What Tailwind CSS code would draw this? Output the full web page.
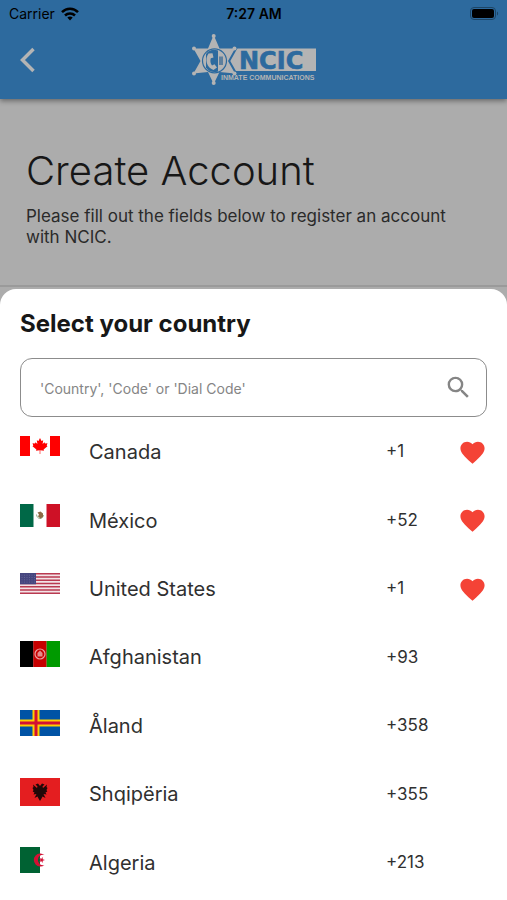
<!DOCTYPE html>
<html lang="en">

<head>
    <meta charset="UTF-8">
    <meta name="viewport" content="width=device-width, initial-scale=1.0">
    <title>Create Account</title>
    <script src="https://cdn.jsdelivr.net/npm/@tailwindcss/browser@4"></script>
</head>

<body class="min-h-screen flex flex-col bg-[#acacac] font-['Inter',sans-serif] text-[#171717]">
    <header class="bg-[#2d6a9e] shadow-[0_2px_5px_rgba(0,0,0,0.4)]">
        <!-- Status bar -->
        <div class="grid grid-cols-3 items-center h-7 pl-[9px] pr-2 text-black text-sm">
            <div class="flex items-center gap-[6px]">
                <span>Carrier</span>
                <svg class="w-[18px] h-[14px]" viewBox="0 0 18 14" fill="none" stroke="#000" stroke-width="2.5">
                    <path d="M1 5.2C5.4 0.6 12.6 0.6 17 5.2" />
                    <path d="M4 8.5C6.8 5.7 11.2 5.7 14 8.5" />
                    <path d="M6.3 10.6C7.8 9.2 10.2 9.2 11.7 10.6L9 13.5Z" fill="#000" stroke="none" />
                </svg>
            </div>
            <span class="text-center font-semibold">7:27 AM</span>
            <svg class="justify-self-end w-[29px] h-[14px]" viewBox="0 0 29 14">
                <rect x="0.5" y="0.5" width="25" height="12" rx="3.5" fill="none" stroke="#1d4565" />
                <rect x="2" y="2" width="22" height="9" rx="2" fill="#000" />
                <path d="M27 4.5V8.5C28.5 8 28.5 5 27 4.5Z" fill="#1d4565" />
            </svg>
        </div>
        <!-- Nav bar -->
        <div class="grid grid-cols-[1fr_auto_1fr] items-center h-[71px] px-4 pb-2">
            <button type="button" aria-label="Back" class="justify-self-start">
                <svg class="w-6 h-7" viewBox="0 0 24 28" fill="none" stroke="#b4b4b4" stroke-width="3.5">
                    <path d="M17.5 3L6.500 14L17.500 25" />
                </svg>
            </button>
            <svg class="w-[130px] h-[58px]" viewBox="189 31 130 58" role="img" aria-label="NCIC Inmate Communications">
                <path d="M228 48.5H316V71H228Z" fill="#b4b4b4" />
                <path d="M213.7 35L219.500 48.500H235L228 61L235 73.500L219.500 72L213.700 84L208 72L193.500 73.500L200.500 61L193.500 48.500H208Z"
                    fill="#b4b4b4" stroke="#2d6a9e" stroke-width="4" paint-order="stroke" />
                <g fill="#b4b4b4">
                    <circle cx="213.7" cy="36" r="2" />
                    <circle cx="213.7" cy="83" r="2" />
                    <circle cx="194" cy="48.5" r="2" />
                    <circle cx="194" cy="73.5" r="2" />
                    <circle cx="234.5" cy="48.5" r="2" />
                    <circle cx="234.5" cy="73.5" r="2" />
                </g>
                <circle cx="214.5" cy="60.8" r="12" fill="#b4b4b4" stroke="#2d6a9e" stroke-width="1.2" />
                <path d="M218 50.500V71.500A11 11 0 0 1 206 67.500L206 54A11 11 0 0 1 218 50.500Z" fill="#2d6a9e" />
                <path d="M212.500 53.200L208.500 53.500C204.500 59 206.500 67.500 213.500 70L217 67.500L214.500 64.200L212 65.500C210.300 63.300 210 60.500 210.800 58.200L213.500 57.500Z" fill="#b4b4b4" />
                <path d="M219 56.500H223V65H219Z" fill="#5d7f9d" />
                <text x="239" y="68.500" font-family="DejaVu Sans" font-weight="700" font-size="24" fill="#2d6a9e" stroke="#2d6a9e" stroke-width="0.6">NCIC</text>
                <text x="221" y="80" font-family="Liberation Sans" font-weight="700" font-size="7" fill="#b4b4b4">INMATE COMMUNICATIONS</text>
            </svg>
        </div>
    </header>

    <main class="h-[188px] border-b-2 border-[#9a9a9a] px-[26px] pt-12">
        <h1 class="text-[40px] leading-[48px] font-light">Create Account</h1>
        <p class="mt-[11px] text-[17px] leading-[21px] text-[#2a2a2a]">Please fill out the fields below to register an account with NCIC.</p>
    </main>

    <section class="mt-[2px] flex-1 flex flex-col rounded-t-2xl bg-white px-5 pt-5 pb-1" aria-labelledby="sheetTitle">
        <h2 id="sheetTitle" class="text-2xl leading-[30px] font-bold">Select your country</h2>
        <div class="relative mt-[19px]">
            <input type="text" id="search" aria-label="Search country" placeholder="'Country', 'Code' or 'Dial Code'"
                class="block w-full h-[59px] rounded-xl border border-[#8c8c8c] pl-[19px] pr-14 pt-[2px] text-sm placeholder:text-[#858585] focus:outline-none">
            <svg class="absolute right-[14px] top-[15px] w-[29px] h-[29px]" viewBox="0 0 24 24" fill="#858585">
                <path d="M15.5 14h-.79l-.28-.27A6.471 6.471 0 0 0 16 9.5 6.5 6.5 0 1 0 9.5 16c1.61 0 3.09-.59 4.23-1.57l.27.28v.79l5 4.99L20.49 19l-4.99-5zm-6 0C7.01 14 5 11.99 5 9.5S7.01 5 9.5 5 14 7.01 14 9.5 11.99 14 9.5 14z" />
            </svg>
        </div>

        <ul class="flex-1 grid auto-rows-fr text-[#303030]">
            <li>
                <button type="button" class="w-full h-full grid grid-cols-[69px_1fr_72px_29px] items-center pt-[2px] text-left">
                    <svg class="self-start mt-[17px] w-10 h-5" viewBox="0 0 40 20">
                        <path d="M0 0H40V20H0Z" fill="#fff" />
                        <path d="M0 0H10V20H0ZM30 0H40V20H30Z" fill="#f00" />
                        <path d="M20 2L21.5 5L23.2 4.2L22.6 8L24.5 6.3L25 7.5L27.5 7.2L26.7 9.5L27.5 10.3L23.6 13.4L24 14.8L20.3 14.3V18H19.7V14.3L16 14.8L16.4 13.4L12.5 10.3L13.3 9.5L12.5 7.2L15 7.5L15.5 6.3L17.4 8L16.8 4.2L18.5 5Z" fill="#f00" />
                    </svg>
                    <span class="text-xl">Canada</span>
                    <span class="text-[17px]">+1</span>
                    <svg class="w-[29px] h-[29px]" viewBox="0 0 24 24" fill="#f44336">
                        <path d="M12 21.35l-1.45-1.32C5.4 15.36 2 12.28 2 8.5 2 5.42 4.42 3 7.5 3c1.74 0 3.41.81 4.5 2.09C13.09 3.81 14.76 3 16.5 3 19.58 3 22 5.42 22 8.5c0 3.78-3.4 6.86-8.55 11.54L12 21.35z" />
                    </svg>
                </button>
            </li>
            <li>
                <button type="button" class="w-full h-full grid grid-cols-[69px_1fr_72px_29px] items-center pt-[2px] text-left">
                    <svg class="self-start mt-[17px] w-10 h-[23px]" viewBox="0 0 40 23">
                        <path d="M0 0H40V23H0Z" fill="#fff" />
                        <path d="M0 0H13.5V23H0Z" fill="#006847" />
                        <path d="M26.5 0H40V23H26.5Z" fill="#ce1126" />
                        <path d="M16.500 10.500C17 15.500 22.500 16 23.500 11" fill="none" stroke="#8fae86" />
                        <path d="M17.500 8.500L20.500 7.500L23 9.500L23 13L20.500 14.500L18 12.500L19 10.500Z" fill="#8c6a45" />
                    </svg>
                    <span class="text-xl">México</span>
                    <span class="text-[17px]">+52</span>
                    <svg class="w-[29px] h-[29px]" viewBox="0 0 24 24" fill="#f44336">
                        <path d="M12 21.35l-1.45-1.32C5.4 15.36 2 12.28 2 8.5 2 5.42 4.42 3 7.5 3c1.74 0 3.41.81 4.5 2.09C13.09 3.81 14.76 3 16.5 3 19.58 3 22 5.42 22 8.5c0 3.78-3.4 6.86-8.55 11.54L12 21.35z" />
                    </svg>
                </button>
            </li>
            <li>
                <button type="button" class="w-full h-full grid grid-cols-[69px_1fr_72px_29px] items-center pt-[2px] text-left">
                    <svg class="self-start mt-[17px] w-10 h-[21px]" viewBox="0 0 40 21">
                        <path d="M0 0H40V21H0Z" fill="#f3e3e6" />
                        <path d="M0 .8H40M0 4H40M0 7.3H40M0 10.5H40M0 13.7H40M0 17H40M0 20.2H40" stroke="#b93a50" stroke-width="1.6" />
                        <path d="M0 0H16V11.3H0Z" fill="#46467f" />
                        <path d="M1.5 2.2H16M1.5 4.5H16M1.5 6.8H16M1.5 9.1H16" stroke="#6b6b9a" stroke-width="0.8" stroke-dasharray="1 1.5" />
                    </svg>
                    <span class="text-xl">United States</span>
                    <span class="text-[17px]">+1</span>
                    <svg class="w-[29px] h-[29px]" viewBox="0 0 24 24" fill="#f44336">
                        <path d="M12 21.35l-1.45-1.32C5.4 15.36 2 12.28 2 8.5 2 5.42 4.42 3 7.5 3c1.74 0 3.41.81 4.5 2.09C13.09 3.81 14.76 3 16.5 3 19.58 3 22 5.42 22 8.5c0 3.78-3.4 6.86-8.55 11.54L12 21.35z" />
                    </svg>
                </button>
            </li>
            <li>
                <button type="button" class="w-full h-full grid grid-cols-[69px_1fr_72px_29px] items-center pt-[2px] text-left">
                    <svg class="self-start mt-[17px] w-10 h-[26px]" viewBox="0 0 40 26">
                        <path d="M0 0H13.5V26H0Z" fill="#000" />
                        <path d="M13.3 0H26.7V26H13.3Z" fill="#c70000" />
                        <path d="M26.6 0H40V26H26.6Z" fill="#009a00" />
                        <circle cx="20" cy="13" r="5" fill="none" stroke="#e9a0a0" stroke-width="1.2" />
                        <path d="M17.5 15.5V12L20 9.5L22.5 12V15.5Z" fill="#e58b8b" />
                    </svg>
                    <span class="text-xl">Afghanistan</span>
                    <span class="text-[17px]">+93</span>
                </button>
            </li>
            <li>
                <button type="button" class="w-full h-full grid grid-cols-[69px_1fr_72px_29px] items-center pt-[2px] text-left">
                    <svg class="self-start mt-[17px] w-10 h-[26px]" viewBox="0 0 40 26">
                        <path d="M0 0H40V26H0Z" fill="#0053a5" />
                        <path d="M16 0V26M0 13H40" stroke="#ffce00" stroke-width="7" />
                        <path d="M16 0V26M0 13H40" stroke="#d21034" stroke-width="3" />
                    </svg>
                    <span class="text-xl">Åland</span>
                    <span class="text-[17px]">+358</span>
                </button>
            </li>
            <li>
                <button type="button" class="w-full h-full grid grid-cols-[69px_1fr_72px_29px] items-center pt-[2px] text-left">
                    <svg class="self-start mt-[17px] w-10 h-7" viewBox="0 0 40 28">
                        <path d="M0 0H40V28H0Z" fill="#e41e20" />
                        <path d="M20 8L18 5.5L15.5 6.5L17.5 8.5L17 10L13 6.5L13.5 9L12.5 10L13.5 12L12.7 13.5L14.5 14.5L13.5 16.5L16.5 16L14.5 20L17.5 18.5L18.5 20.5L20 23L21.5 20.5L22.5 18.5L25.5 20L23.5 16L26.5 16.5L25.5 14.5L27.3 13.5L26.5 12L27.5 10L26.5 9L27 6.5L23 10L22.5 8.5L24.5 6.5L22 5.5Z" fill="#210808" />
                    </svg>
                    <span class="text-xl">Shqipëria</span>
                    <span class="text-[17px]">+355</span>
                </button>
            </li>
            <li>
                <button type="button" class="w-full h-full grid grid-cols-[69px_1fr_72px_29px] items-center pt-[2px] text-left">
                    <svg class="self-start mt-[17px] w-10 h-[26px]" viewBox="0 0 40 26">
                        <path d="M0 0H40V26H0Z" fill="#fff" />
                        <path d="M0 0H20V26H0Z" fill="#006233" />
                        <path d="M24.500 8A6.500 6.500 0 1 0 24.500 18A5.200 5.200 0 1 1 24.500 8Z" fill="#d21034" />
                        <path d="M25 13L22.7 13.7L22.7 16L21.4 14.2L19.2 15L20.5 13L19.2 11L21.4 11.8L22.7 10L22.7 12.3Z" fill="#d21034" />
                    </svg>
                    <span class="text-xl">Algeria</span>
                    <span class="text-[17px]">+213</span>
                </button>
            </li>
        </ul>
    </section>
</body>

</html>
